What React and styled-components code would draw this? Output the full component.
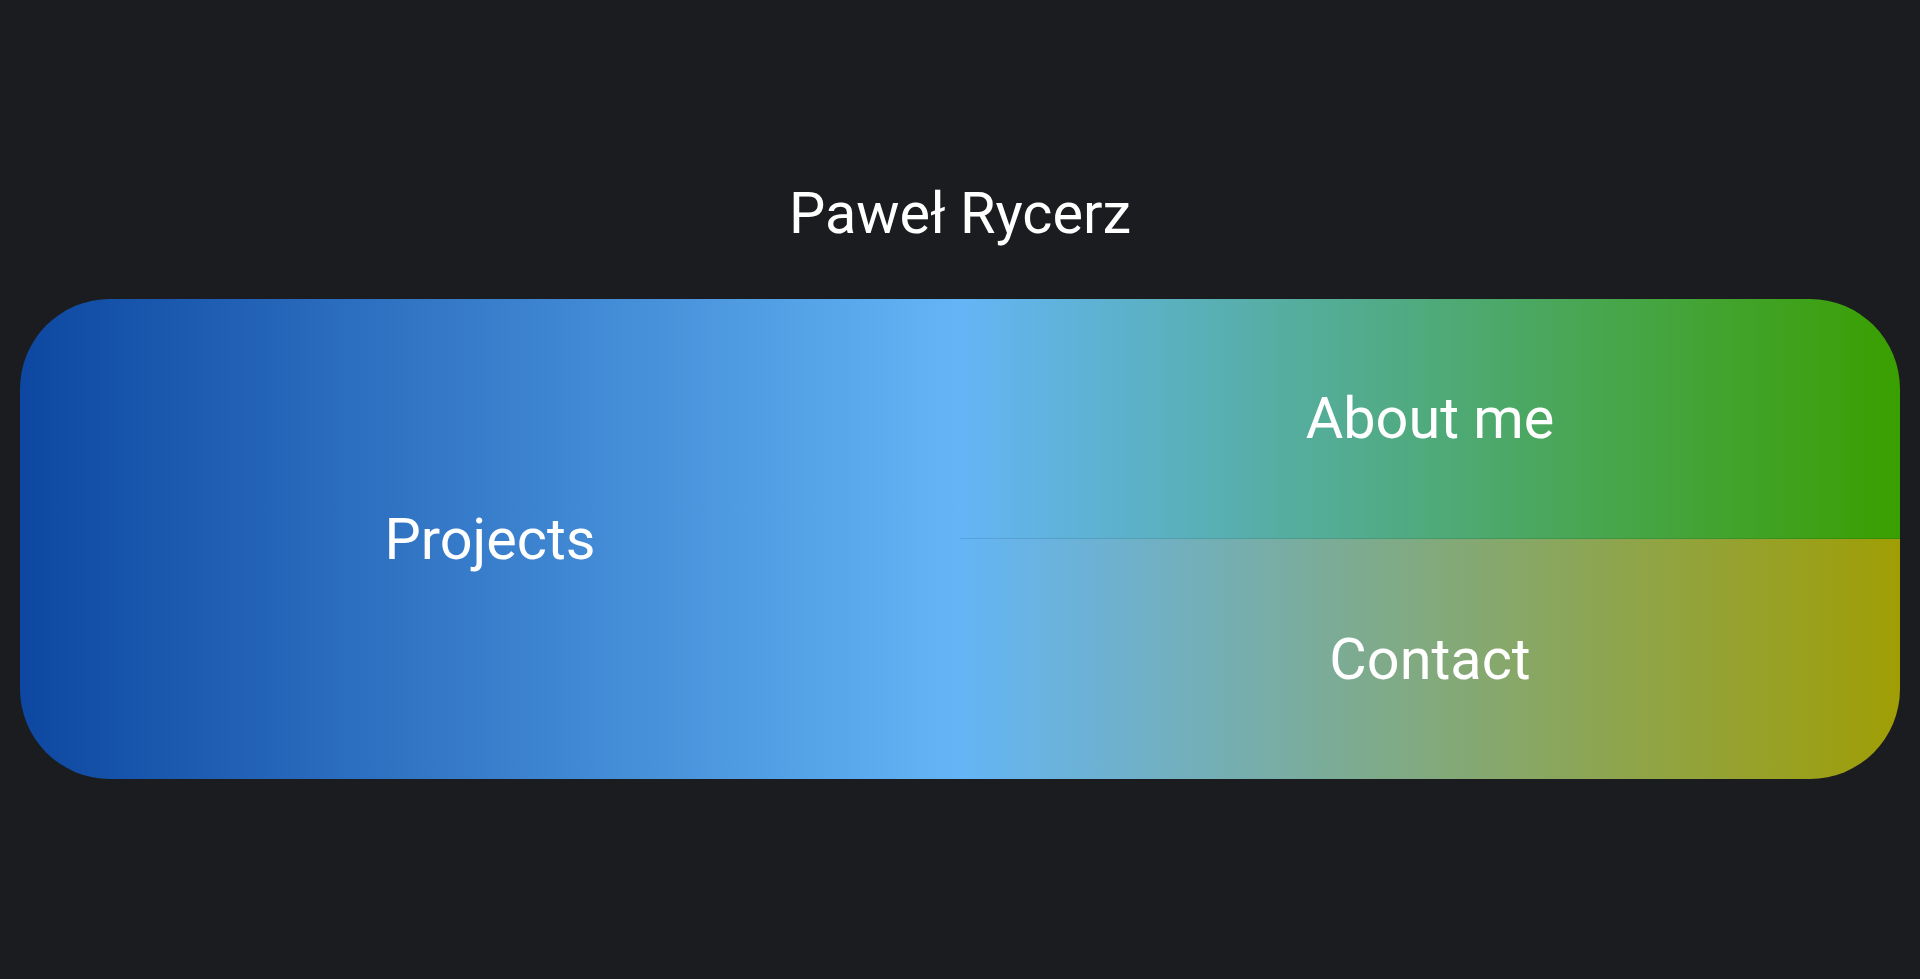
import React from 'react';
import styled, { createGlobalStyle } from 'styled-components';

const GlobalStyle = createGlobalStyle`
  html, body {
    margin: 0;
    padding: 0;
    background: #1b1c1f;
    font-family: Roboto, "Noto Sans", "Liberation Sans", sans-serif;
    color: #ffffff;
  }
`;

const Page = styled.div`
  display: flex;
  flex-direction: column;
  align-items: stretch;
  min-height: 979px;
  padding: 180px 20px 0;
  box-sizing: border-box;
`;

const Title = styled.h1`
  margin: 0;
  font-size: 57.6px;
  font-weight: 400;
  line-height: 68px;
  text-align: center;
`;

const Card = styled.nav`
  margin-top: 51px;
  height: 480px;
  border-radius: 90px;
  overflow: hidden;
  display: grid;
  grid-template-columns: 1fr 1fr;
  grid-template-rows: 1fr 1fr;
`;

const Tile = styled.a`
  display: flex;
  align-items: center;
  justify-content: center;
  box-sizing: border-box;
  color: #ffffff;
  text-decoration: none;
  font-size: 57.6px;
  font-weight: 400;
  cursor: pointer;
  grid-row: ${p => (p.$tall ? '1 / span 2' : 'auto')};
  background: linear-gradient(90deg, ${p => p.$from}, ${p => p.$to});
  border-bottom: ${p => (p.$divider ? '1px solid rgba(0, 0, 0, 0.1)' : 'none')};
`;

export default function App() {
  return (
    <>
      <GlobalStyle />
      <Page>
        <Title>Paweł Rycerz</Title>
        <Card>
          <Tile $tall $from="#0d47a1" $to="#64b5f6">Projects</Tile>
          <Tile $divider $from="#64b5f6" $to="#3a9f00">About me</Tile>
          <Tile $from="#64b5f6" $to="#a09e05">Contact</Tile>
        </Card>
      </Page>
    </>
  );
}
